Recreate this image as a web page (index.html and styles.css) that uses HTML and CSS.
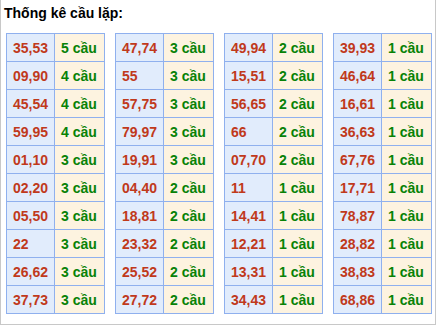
FILE: index.html
```html
<!DOCTYPE html>
<html lang="vi">
<head>
<meta charset="utf-8">
<title>Thống kê cầu lặp</title>
<link rel="stylesheet" href="styles.css">
</head>
<body>
<div class="box">
  <div class="title">Thống kê cầu lặp:</div>
  <div class="tables">
    <div class="grid">
      <div class="num">35,53</div><div class="cnt">5 cầu</div>
      <div class="num">09,90</div><div class="cnt">4 cầu</div>
      <div class="num">45,54</div><div class="cnt">4 cầu</div>
      <div class="num">59,95</div><div class="cnt">4 cầu</div>
      <div class="num">01,10</div><div class="cnt">3 cầu</div>
      <div class="num">02,20</div><div class="cnt">3 cầu</div>
      <div class="num">05,50</div><div class="cnt">3 cầu</div>
      <div class="num">22</div><div class="cnt">3 cầu</div>
      <div class="num">26,62</div><div class="cnt">3 cầu</div>
      <div class="num">37,73</div><div class="cnt">3 cầu</div>
    </div>
    <div class="grid">
      <div class="num">47,74</div><div class="cnt">3 cầu</div>
      <div class="num">55</div><div class="cnt">3 cầu</div>
      <div class="num">57,75</div><div class="cnt">3 cầu</div>
      <div class="num">79,97</div><div class="cnt">3 cầu</div>
      <div class="num">19,91</div><div class="cnt">3 cầu</div>
      <div class="num">04,40</div><div class="cnt">2 cầu</div>
      <div class="num">18,81</div><div class="cnt">2 cầu</div>
      <div class="num">23,32</div><div class="cnt">2 cầu</div>
      <div class="num">25,52</div><div class="cnt">2 cầu</div>
      <div class="num">27,72</div><div class="cnt">2 cầu</div>
    </div>
    <div class="grid">
      <div class="num">49,94</div><div class="cnt">2 cầu</div>
      <div class="num">15,51</div><div class="cnt">2 cầu</div>
      <div class="num">56,65</div><div class="cnt">2 cầu</div>
      <div class="num">66</div><div class="cnt">2 cầu</div>
      <div class="num">07,70</div><div class="cnt">2 cầu</div>
      <div class="num">11</div><div class="cnt">1 cầu</div>
      <div class="num">14,41</div><div class="cnt">1 cầu</div>
      <div class="num">12,21</div><div class="cnt">1 cầu</div>
      <div class="num">13,31</div><div class="cnt">1 cầu</div>
      <div class="num">34,43</div><div class="cnt">1 cầu</div>
    </div>
    <div class="grid">
      <div class="num">39,93</div><div class="cnt">1 cầu</div>
      <div class="num">46,64</div><div class="cnt">1 cầu</div>
      <div class="num">16,61</div><div class="cnt">1 cầu</div>
      <div class="num">36,63</div><div class="cnt">1 cầu</div>
      <div class="num">67,76</div><div class="cnt">1 cầu</div>
      <div class="num">17,71</div><div class="cnt">1 cầu</div>
      <div class="num">78,87</div><div class="cnt">1 cầu</div>
      <div class="num">28,82</div><div class="cnt">1 cầu</div>
      <div class="num">38,83</div><div class="cnt">1 cầu</div>
      <div class="num">68,86</div><div class="cnt">1 cầu</div>
    </div>
  </div>
</div>
</body>
</html>
```

FILE: styles.css
```css
html, body {
  margin: 0;
  padding: 0;
  background: #ffffff;
}
body {
  font-family: "Liberation Sans", Arial, sans-serif;
}
.box {
  width: 434px;
  height: 324px;
  border: 1px solid #c8c8c8;
  border-top: none;
  padding: 0 0 0 5px;
  box-sizing: content-box;
  width: 429px;
}
.title {
  font-size: 14px;
  font-weight: bold;
  color: #000;
  line-height: 18px;
  padding-top: 4px;
  margin-left: -2px;
  height: 29px;
}
.tables {
  display: flex;
  gap: 10px;
}
.grid {
  display: grid;
  grid-template-columns: 47px 49px;
  grid-auto-rows: 27px;
  gap: 1px;
  padding: 1px;
  background: #8fb0ee;
}
.num, .cnt {
  display: flex;
  align-items: center;
  padding-left: 6px;
  font-size: 14px;
  font-weight: bold;
}
.num {
  background: #e1ecfc;
  color: #c0391b;
}
.cnt {
  background: #fdf3e0;
  color: #078207;
}
```
